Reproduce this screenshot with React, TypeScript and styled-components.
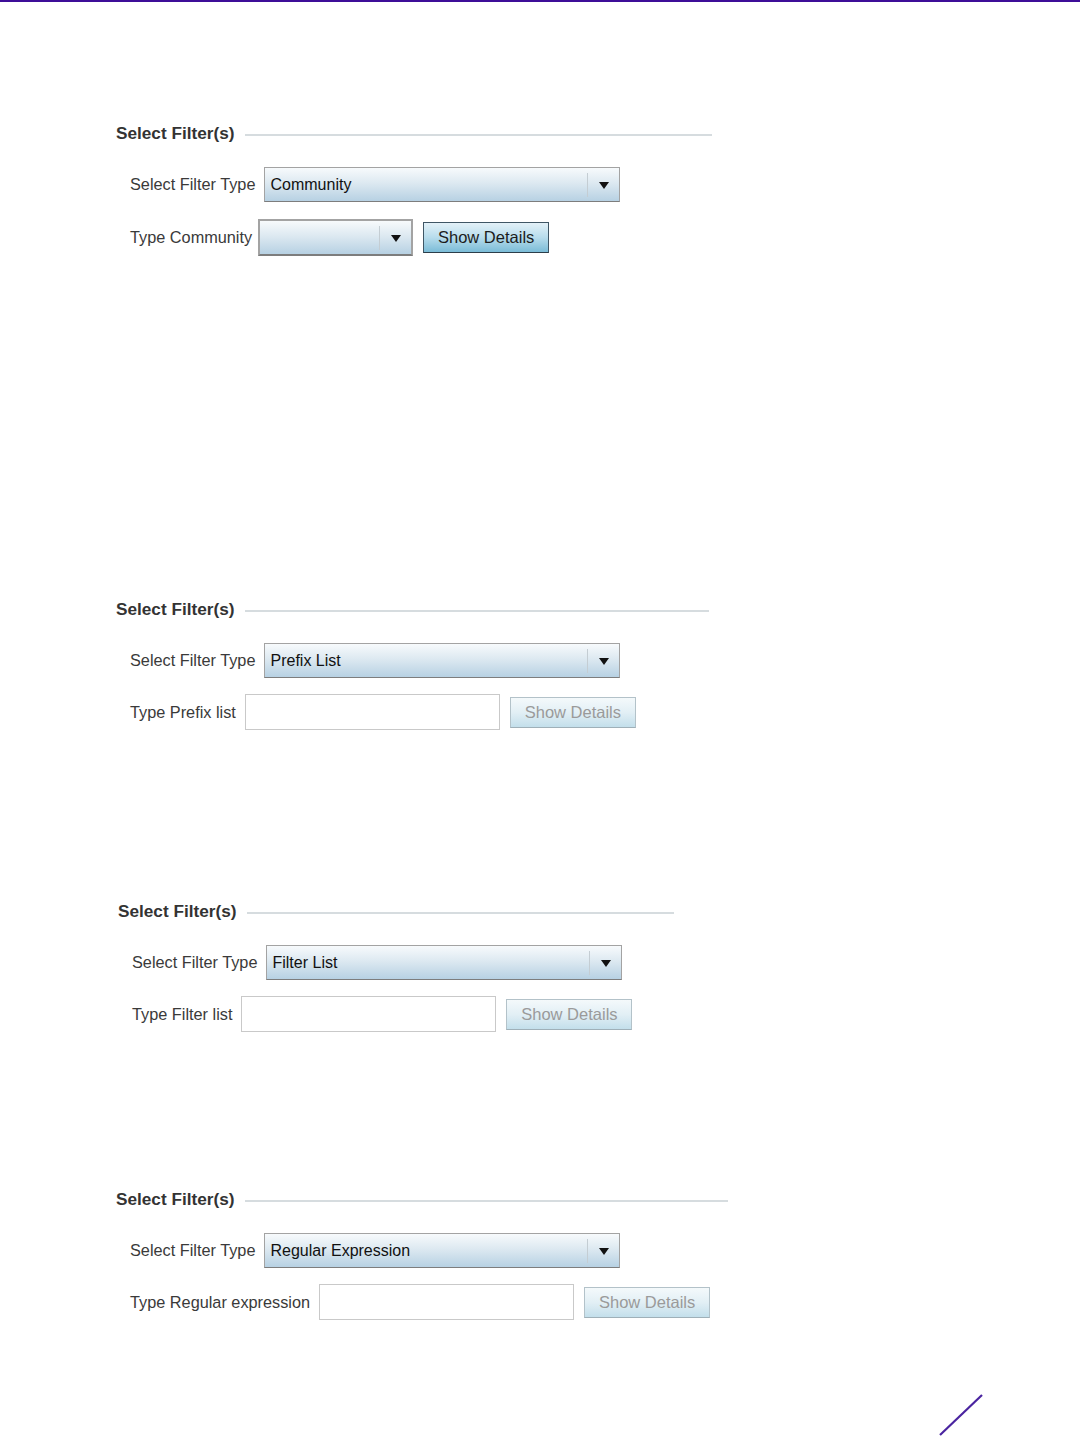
import styled, { createGlobalStyle } from 'styled-components';

const GlobalStyle = createGlobalStyle`
  html, body {
    margin: 0;
    padding: 0;
    background: #ffffff;
  }
  body {
    font-family: "Liberation Sans", Arial, sans-serif;
  }
`;

const Page = styled.div`
  position: relative;
  width: 1080px;
  height: 1436px;
  box-sizing: border-box;
  border-top: 2px solid #3e0e98;
  padding-left: 116px;
  overflow: hidden;
`;

const Section = styled.section<{ $top: number; $shift?: number }>`
  display: flex;
  flex-direction: column;
  margin-top: ${(p) => p.$top}px;
  margin-left: ${(p) => p.$shift || 0}px;
`;

const Header = styled.div`
  display: flex;
  align-items: center;
  height: 20px;
  gap: 11px;
`;

const Title = styled.h3`
  margin: 0;
  font-size: 17.2px;
  font-weight: bold;
  color: #333333;
  line-height: 20px;
`;

const Rule = styled.div<{ $width: number }>`
  width: ${(p) => p.$width}px;
  height: 2px;
  margin-top: 3px;
  background: #d6dcdf;
`;

const Row = styled.div<{ $top: number }>`
  display: flex;
  align-items: center;
  gap: 10px;
  padding-left: 14px;
  margin-top: ${(p) => p.$top}px;
`;

const Label = styled.label`
  font-size: 16.3px;
  color: #3a3a3a;
  white-space: nowrap;
  margin-right: -1px;
`;

const Combo = styled.div<{ $width: number; $thick?: boolean }>`
  display: flex;
  align-items: center;
  box-sizing: border-box;
  width: ${(p) => p.$width}px;
  height: ${(p) => (p.$thick ? 37 : 35)}px;
  margin-left: ${(p) => (p.$thick ? -3 : 0)}px;
  border: ${(p) => (p.$thick ? 2 : 1)}px solid #a3a3a3;
  border-bottom-color: #7d7d7d;
  background: linear-gradient(to bottom, #f7fafc 0%, #dde9f1 45%, #b7d1e3 100%);
`;

const ComboText = styled.span`
  flex: 1;
  padding-left: 5px;
  font-size: 16px;
  color: #111111;
  white-space: nowrap;
`;

const ComboArrow = styled.div`
  display: flex;
  align-items: center;
  justify-content: center;
  width: 31px;
  height: 24px;
  border-left: 1px solid #c4cdd3;
`;

const Arrow = styled.span`
  width: 0;
  height: 0;
  border-left: 5px solid transparent;
  border-right: 5px solid transparent;
  border-top: 7px solid #111111;
  margin-top: 2px;
`;

const TextInput = styled.div`
  box-sizing: border-box;
  width: 255px;
  height: 36px;
  border: 1px solid #c9c9c9;
  background: #ffffff;
`;

const Button = styled.button<{ $disabled?: boolean }>`
  box-sizing: border-box;
  width: 126px;
  height: 31px;
  padding: 0;
  font-family: "Liberation Sans", Arial, sans-serif;
  font-size: 16.5px;
  color: ${(p) => (p.$disabled ? '#9a9a9a' : '#1c1c1c')};
  border: 1px solid ${(p) => (p.$disabled ? '#b3c2c9' : '#3f5665')};
  border-bottom-color: ${(p) => (p.$disabled ? '#9fb0b8' : '#2c3e49')};
  background: ${(p) =>
    p.$disabled
      ? 'linear-gradient(to bottom, #f4f9fb 0%, #e2eff5 50%, #c3dfeb 100%)'
      : 'linear-gradient(to bottom, #e3f1f8 0%, #b7dcec 50%, #7bbcd7 100%)'};
`;

const Slash = styled.svg`
  position: absolute;
  right: 96px;
  bottom: 0;
`;

interface Filter {
  type: string;
  label: string;
  top: number;
  rule: number;
  shift?: number;
  community?: boolean;
}

const filters: Filter[] = [
  { type: 'Community', label: 'Type Community', top: 121, rule: 467, community: true },
  { type: 'Prefix List', label: 'Type Prefix list', top: 343, rule: 464 },
  { type: 'Filter List', label: 'Type Filter list', top: 171, rule: 427, shift: 2 },
  { type: 'Regular Expression', label: 'Type Regular expression', top: 157, rule: 483 },
];

const App = () => {
  return (
    <>
      <GlobalStyle />
      <Page>
        {filters.map((f) => (
          <Section key={f.type} $top={f.top} $shift={f.shift}>
            <Header>
              <Title>Select Filter(s)</Title>
              <Rule $width={f.rule} />
            </Header>
            <Row $top={24}>
              <Label>Select Filter Type</Label>
              <Combo $width={356}>
                <ComboText>{f.type}</ComboText>
                <ComboArrow>
                  <Arrow />
                </ComboArrow>
              </Combo>
            </Row>
            <Row $top={f.community ? 17 : 16}>
              <Label>{f.label}</Label>
              {f.community ? (
                <Combo $width={155} $thick>
                  <ComboText />
                  <ComboArrow>
                    <Arrow />
                  </ComboArrow>
                </Combo>
              ) : (
                <TextInput />
              )}
              <Button $disabled={!f.community}>Show Details</Button>
            </Row>
          </Section>
        ))}
        <Slash width="46" height="42" viewBox="0 0 46 42">
          <line x1="2" y1="41" x2="44" y2="1" stroke="#4a24a0" strokeWidth="2.2" />
        </Slash>
      </Page>
    </>
  );
};

export default App;
